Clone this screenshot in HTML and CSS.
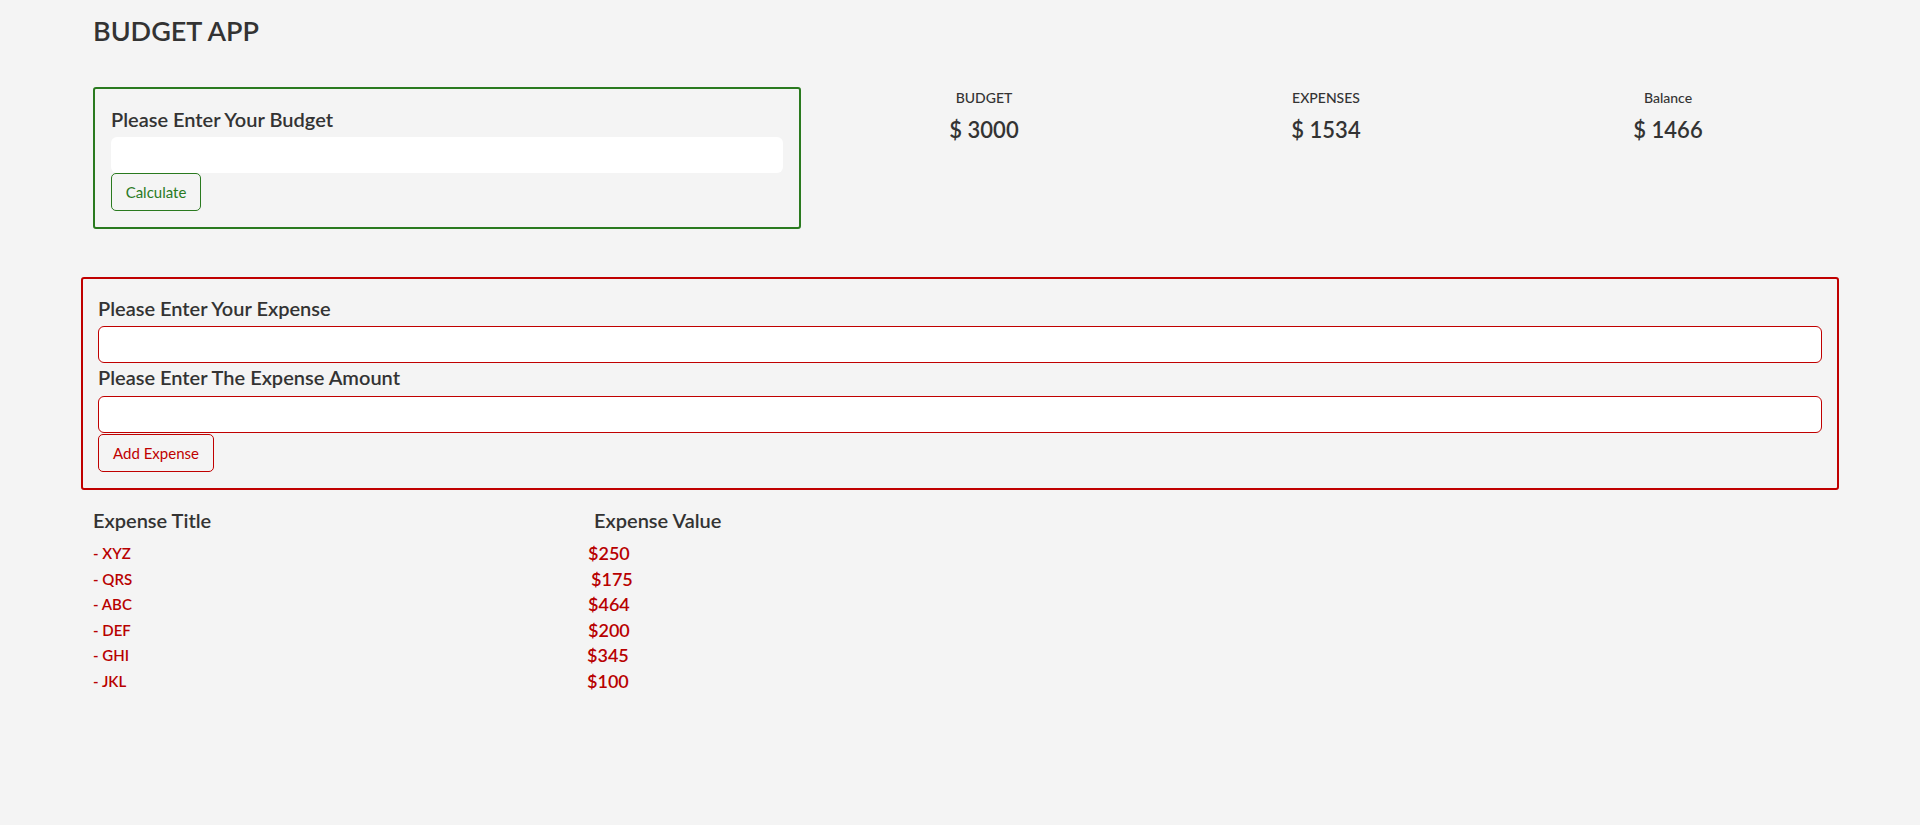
FILE: index.html
```html
<!DOCTYPE html>
<html lang="en">
<head>
<meta charset="utf-8">
<title>Budget App</title>
<link rel="stylesheet" href="styles.css">
</head>
<body>
<div class="container">
  <h1 class="app-title">BUDGET APP</h1>

  <div class="top-row">
    <div class="budget-col">
      <form class="budget-form">
        <label class="form-label" for="budget">Please Enter Your Budget</label>
        <input class="budget-input" id="budget" type="number">
        <button class="btn btn-green" type="button">Calculate</button>
      </form>
    </div>
    <div class="stats-col">
      <div class="stat">
        <div class="stat-label">BUDGET</div>
        <div class="stat-value">$ 3000</div>
      </div>
      <div class="stat">
        <div class="stat-label">EXPENSES</div>
        <div class="stat-value">$ 1534</div>
      </div>
      <div class="stat">
        <div class="stat-label">Balance</div>
        <div class="stat-value">$ 1466</div>
      </div>
    </div>
  </div>

  <form class="expense-form">
    <label class="form-label" for="exp-title">Please Enter Your Expense</label>
    <input class="expense-input" id="exp-title" type="text">
    <label class="form-label second" for="exp-amount">Please Enter The Expense Amount</label>
    <input class="expense-input" id="exp-amount" type="number">
    <button class="btn btn-red" type="button">Add Expense</button>
  </form>

  <div class="expense-list">
    <div class="list-head">Expense Title</div>
    <div class="list-head value-head">Expense Value</div>

    <div class="item-title">- XYZ</div><div class="item-value">$250</div>
    <div class="item-title">- QRS</div><div class="item-value shift-3">$175</div>
    <div class="item-title">- ABC</div><div class="item-value">$464</div>
    <div class="item-title">- DEF</div><div class="item-value">$200</div>
    <div class="item-title">- GHI</div><div class="item-value shift-m1">$345</div>
    <div class="item-title">- JKL</div><div class="item-value shift-m1">$100</div>
  </div>
</div>
</body>
</html>
```

FILE: styles.css
```css
* { box-sizing: border-box; }

body {
  margin: 0;
  background: #f4f4f4;
  color: #333;
  font-family: Lato, "Open Sans", Arial, sans-serif;
}

.container {
  margin: 0 81px;
}

.app-title {
  margin: 0;
  padding: 14px 12px 0;
  font-size: 27px;
  line-height: 34px;
  font-weight: 600;
  color: #333;
}

.top-row {
  display: flex;
  margin-top: 39px;
}

.budget-col {
  width: 732px;
  padding: 0 12px;
}

.budget-form {
  border: 2px solid #2a7a1f;
  border-radius: 3px;
  padding: 18px 16px 16px;
  display: flex;
  flex-direction: column;
  align-items: flex-start;
}

.form-label {
  display: block;
  font-size: 20px;
  line-height: 24px;
  font-weight: 600;
  color: #333;
  margin-bottom: 6px;
}

.budget-input {
  width: 100%;
  height: 36px;
  border: none;
  border-radius: 6px;
  background: #fff;
  font: inherit;
}

.btn {
  font-family: inherit;
  font-size: 15px;
  line-height: 22px;
  padding: 7px 11px;
  border-radius: 5px;
  background: transparent;
  cursor: pointer;
}

.btn-green {
  border: 1px solid #2a7a1f;
  color: #2a7a1f;
  height: 38px;
  width: 90px;
}

.stats-col {
  flex: 1;
  display: grid;
  grid-template-columns: repeat(3, 1fr);
  align-content: start;
}

.stat {
  text-align: center;
  padding-top: 2px;
}

.stat-label {
  font-size: 14px;
  line-height: 17px;
  font-weight: 500;
}

.stat-value {
  margin-top: 11px;
  font-size: 22px;
  line-height: 26px;
  font-weight: 600;
}

.expense-form {
  margin-top: 48px;
  border: 2px solid #c00000;
  border-radius: 3px;
  padding: 17px 15px 16px;
  display: flex;
  flex-direction: column;
  align-items: flex-start;
}

.expense-input {
  width: 100%;
  height: 37px;
  border: 1px solid #c00000;
  border-radius: 6px;
  background: #fff;
  font: inherit;
}

.form-label.second {
  margin-top: 2px;
  margin-bottom: 7px;
}

.btn-red {
  border: 1px solid #c00000;
  color: #c00000;
  margin-top: 1px;
  height: 38px;
  width: 116px;
  padding: 7px 10px;
}

.expense-list {
  margin-top: 18px;
  padding-left: 12px;
  display: grid;
  grid-template-columns: 495px 1fr;
  grid-template-rows: 33px;
  grid-auto-rows: 25.6px;
}

.list-head {
  font-size: 20px;
  line-height: 24px;
  font-weight: 600;
  color: #333;
}

.value-head {
  padding-left: 6px;
}

.item-title {
  font-size: 15px;
  line-height: 25.6px;
  font-weight: 600;
  color: #b80000;
}

.item-value {
  font-size: 18px;
  line-height: 25.6px;
  font-weight: 600;
  color: #b80000;
}

.shift-3 { padding-left: 3px; }
.shift-m1 { margin-left: -1px; }
```
